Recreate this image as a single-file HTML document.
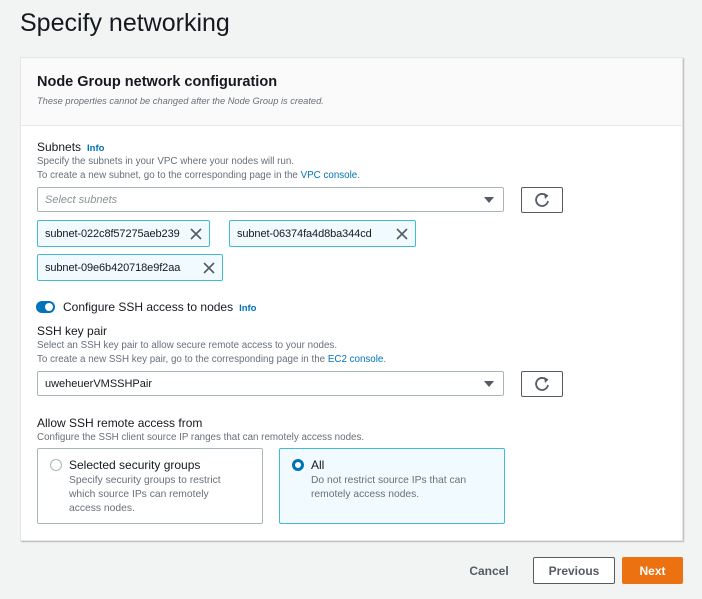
<!DOCTYPE html>
<html><head><meta charset="utf-8"><style>
*{box-sizing:border-box;margin:0;padding:0}
body{width:702px;height:599px;background:#f2f3f3;font-family:"Liberation Sans",sans-serif;color:#16191f;position:relative;overflow:hidden}
.a{position:absolute;white-space:nowrap}
.card{position:absolute;left:20px;top:57px;width:663px;height:484px;background:#fff;border:1px solid #e4e6e6;box-shadow:1px 1px 1px rgba(0,0,0,.25)}
.hdr{position:absolute;left:0;top:0;width:100%;height:68px;background:#fafafa;border-bottom:1px solid #e6e8e8}
.lbl{font-size:12px;color:#16191f}
.desc{font-size:9.8px;color:#687078}
.info{font-size:9.5px;font-weight:bold;color:#0073bb}
.link{color:#0073bb}
.sel{position:absolute;left:37px;width:467px;height:25px;border:1px solid #aab7b8;border-radius:2px;background:#fff;font-size:11px;padding:6px 7px}
.sel .arr{position:absolute;right:9px;top:9px;width:0;height:0;border-left:5px solid transparent;border-right:5px solid transparent;border-top:6px solid #545b64}
.ref{position:absolute;left:521px;width:42px;height:26px;border:1px solid #545b64;border-radius:2px;background:#fff}
.tok{position:absolute;height:27px;background:#f1faff;border:1px solid #44b9d6;border-radius:2px;font-size:11px;padding:7px 7px;color:#16191f;letter-spacing:-0.1px}
.tok svg{position:absolute;right:7px;top:7px}
.rc{position:absolute;top:448px;height:76px;border:1px solid #aab7b8;border-radius:2px;background:#fff}
.btn{position:absolute;font-size:12px;font-weight:bold;text-align:center;border-radius:2px}
</style></head><body>
<div class="a" style="left:20px;top:9px;font-size:25px;color:#16191f">Specify networking</div>
<div class="card"><div class="hdr"></div></div>
<div class="a" style="left:37px;top:74px;font-size:14.5px;font-weight:bold">Node Group network configuration</div>
<div class="a desc" style="left:37px;top:96px;font-style:italic;font-size:9.3px">These properties cannot be changed after the Node Group is created.</div>

<div class="a lbl" style="left:37px;top:140px">Subnets <span class="info">&nbsp;Info</span></div>
<div class="a desc" style="left:37px;top:156px">Specify the subnets in your VPC where your nodes will run.</div>
<div class="a desc" style="left:37px;top:170px">To create a new subnet, go to the corresponding page in the <span class="link">VPC console</span>.</div>
<div class="sel" style="top:187px;color:#879596;font-style:italic">Select subnets<div class="arr"></div></div>
<div class="ref" style="top:187px"><svg width="40" height="24" viewBox="0 0 40 24"><path d="M25 8.5 A6 6 0 1 0 26 13" fill="none" stroke="#545b64" stroke-width="1.8"/><path d="M22 5 L26.5 7.5 L23 11 Z" fill="#545b64"/></svg></div>

<div class="tok" style="left:37px;top:220px;width:173px">subnet-022c8f57275aeb239<svg width="12" height="12"><path d="M1 1L11 11M11 1L1 11" stroke="#545b64" stroke-width="1.6"/></svg></div>
<div class="tok" style="left:229px;top:220px;width:187px">subnet-06374fa4d8ba344cd<svg width="12" height="12"><path d="M1 1L11 11M11 1L1 11" stroke="#545b64" stroke-width="1.6"/></svg></div>
<div class="tok" style="left:37px;top:254px;width:186px">subnet-09e6b420718e9f2aa<svg width="12" height="12"><path d="M1 1L11 11M11 1L1 11" stroke="#545b64" stroke-width="1.6"/></svg></div>

<div class="a" style="left:36px;top:301px;width:19px;height:12px;border-radius:6px;background:#0073bb"><div style="position:absolute;right:2px;top:2px;width:8px;height:8px;border-radius:50%;background:#fff"></div></div>
<div class="a lbl" style="left:63px;top:300px">Configure SSH access to nodes <span class="info">&nbsp;Info</span></div>

<div class="a lbl" style="left:37px;top:324px">SSH key pair</div>
<div class="a desc" style="left:37px;top:340px">Select an SSH key pair to allow secure remote access to your nodes.</div>
<div class="a desc" style="left:37px;top:354px">To create a new SSH key pair, go to the corresponding page in the <span class="link">EC2 console</span>.</div>
<div class="sel" style="top:371px;color:#16191f">uweheuerVMSSHPair<div class="arr"></div></div>
<div class="ref" style="top:371px"><svg width="40" height="24" viewBox="0 0 40 24"><path d="M25 8.5 A6 6 0 1 0 26 13" fill="none" stroke="#545b64" stroke-width="1.8"/><path d="M22 5 L26.5 7.5 L23 11 Z" fill="#545b64"/></svg></div>

<div class="a lbl" style="left:37px;top:416px">Allow SSH remote access from</div>
<div class="a desc" style="left:37px;top:432px">Configure the SSH client source IP ranges that can remotely access nodes.</div>

<div class="rc" style="left:37px;width:226px"></div>
<div class="a" style="left:50px;top:459px;width:12px;height:12px;border:1px solid #aab7b8;border-radius:50%"></div>
<div class="a lbl" style="left:69px;top:458px">Selected security groups</div>
<div class="a desc" style="left:69px;top:474px;line-height:14px;white-space:normal;width:170px;font-size:10.3px">Specify security groups to restrict which source IPs can remotely access nodes.</div>

<div class="rc" style="left:279px;width:226px;background:#f1faff;border-color:#44b9d6"></div>
<div class="a" style="left:292px;top:459px;width:12px;height:12px;border:3.5px solid #0073bb;border-radius:50%;background:#fff"></div>
<div class="a lbl" style="left:311px;top:458px">All</div>
<div class="a desc" style="left:311px;top:474px;line-height:14px;white-space:normal;width:170px;font-size:10.3px">Do not restrict source IPs that can remotely access nodes.</div>

<div class="btn" style="left:466px;top:564px;width:46px;color:#545b64">Cancel</div>
<div class="btn" style="left:533px;top:557px;width:82px;height:27px;border:1px solid #545b64;background:#fff;color:#545b64;padding-top:6px">Previous</div>
<div class="btn" style="left:622px;top:557px;width:61px;height:27px;background:#ec7211;color:#fff;padding-top:7px">Next</div>
</body></html>
